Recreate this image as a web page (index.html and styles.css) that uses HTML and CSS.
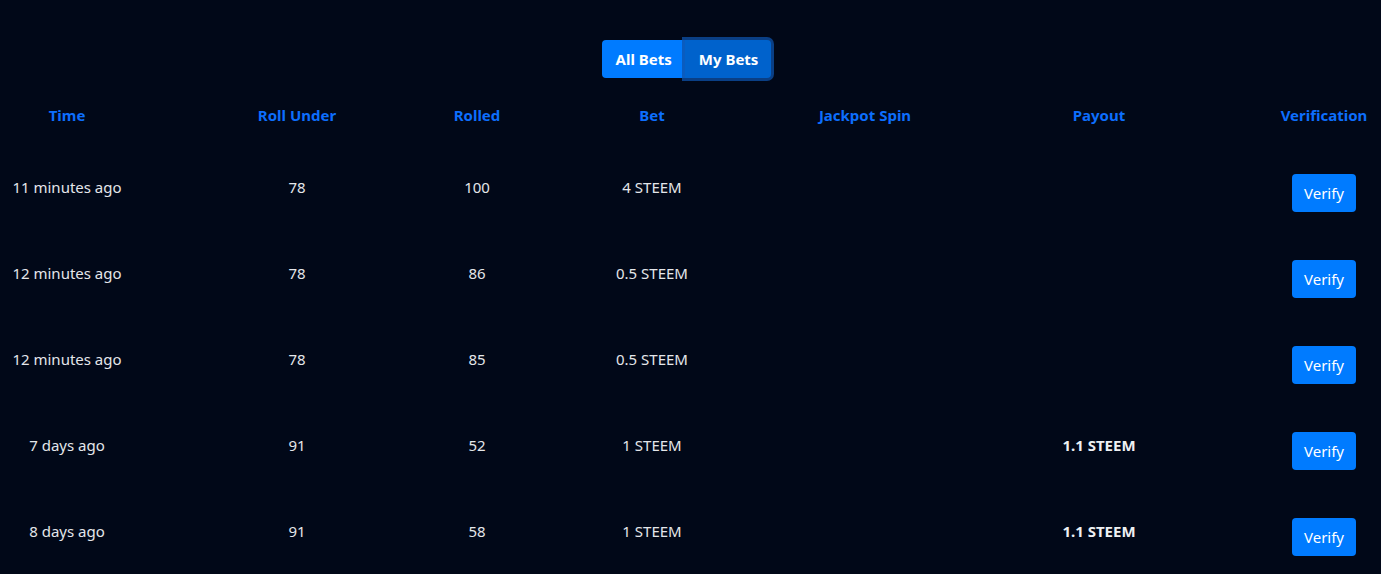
FILE: index.html
```html
<!DOCTYPE html>
<html lang="en">
<head>
<meta charset="utf-8">
<title>Bets</title>
<link rel="stylesheet" href="styles.css">
</head>
<body>
<main class="page">
  <div class="toggle">
    <button class="toggle-btn">All Bets</button>
    <button class="toggle-btn active">My Bets</button>
  </div>
  <div class="bets">
    <div class="th">Time</div>
    <div class="th">Roll Under</div>
    <div class="th">Rolled</div>
    <div class="th">Bet</div>
    <div class="th">Jackpot Spin</div>
    <div class="th">Payout</div>
    <div class="th">Verification</div>

    <div class="td">11 minutes ago</div>
    <div class="td">78</div>
    <div class="td">100</div>
    <div class="td">4 STEEM</div>
    <div class="td"></div>
    <div class="td"></div>
    <div class="td"><button class="verify">Verify</button></div>

    <div class="td">12 minutes ago</div>
    <div class="td">78</div>
    <div class="td">86</div>
    <div class="td">0.5 STEEM</div>
    <div class="td"></div>
    <div class="td"></div>
    <div class="td"><button class="verify">Verify</button></div>

    <div class="td">12 minutes ago</div>
    <div class="td">78</div>
    <div class="td">85</div>
    <div class="td">0.5 STEEM</div>
    <div class="td"></div>
    <div class="td"></div>
    <div class="td"><button class="verify">Verify</button></div>

    <div class="td">7 days ago</div>
    <div class="td">91</div>
    <div class="td">52</div>
    <div class="td">1 STEEM</div>
    <div class="td"></div>
    <div class="td"><strong class="win">1.1 STEEM</strong></div>
    <div class="td"><button class="verify">Verify</button></div>

    <div class="td">8 days ago</div>
    <div class="td">91</div>
    <div class="td">58</div>
    <div class="td">1 STEEM</div>
    <div class="td"></div>
    <div class="td"><strong class="win">1.1 STEEM</strong></div>
    <div class="td"><button class="verify">Verify</button></div>
  </div>
</main>
</body>
</html>
```
FILE: styles.css
```css
html, body {
  margin: 0;
  padding: 0;
  background: #010818;
  height: 100%;
  overflow: hidden;
}
body {
  font-family: "Noto Sans", "Open Sans", sans-serif;
  font-size: 15px;
  line-height: 22px;
  color: #e4e6ea;
}
.page {
  display: flex;
  flex-direction: column;
  align-items: center;
  padding-top: 40px;
}
.toggle {
  display: flex;
  margin-right: 8px;
}
.toggle-btn {
  font-family: inherit;
  font-size: 15px;
  font-weight: 700;
  line-height: 22px;
  color: #fff;
  background: #007bff;
  border: 0;
  padding: 8px 13px 8px 14px;
  border-radius: 4px 0 0 4px;
  cursor: pointer;
}
.toggle-btn.active {
  background: #0062cc;
  border-radius: 0 4px 4px 0;
  padding: 8px 13px 8px 14px;
  box-shadow: 0 0 0 3px rgba(14, 82, 170, 0.75);
  position: relative;
}
.bets {
  align-self: stretch;
  display: grid;
  grid-template-columns: 134px 326px 34px 316px 110px 358px 92px;
  margin-top: 26px;
}
.th, .td {
  display: flex;
  align-items: center;
  justify-content: center;
  white-space: nowrap;
}
.th {
  height: 22px;
  font-weight: 700;
  color: #0d6efd;
  margin-bottom: 18px;
}
.td {
  height: 86px;
}
.win {
  font-weight: 700;
  color: #eef0f3;
}
.verify {
  font-family: inherit;
  font-size: 15px;
  line-height: 22px;
  color: #fff;
  background: #007bff;
  border: 0;
  border-radius: 4px;
  padding: 8px 12px;
  margin-top: 12px;
  cursor: pointer;
}
```
